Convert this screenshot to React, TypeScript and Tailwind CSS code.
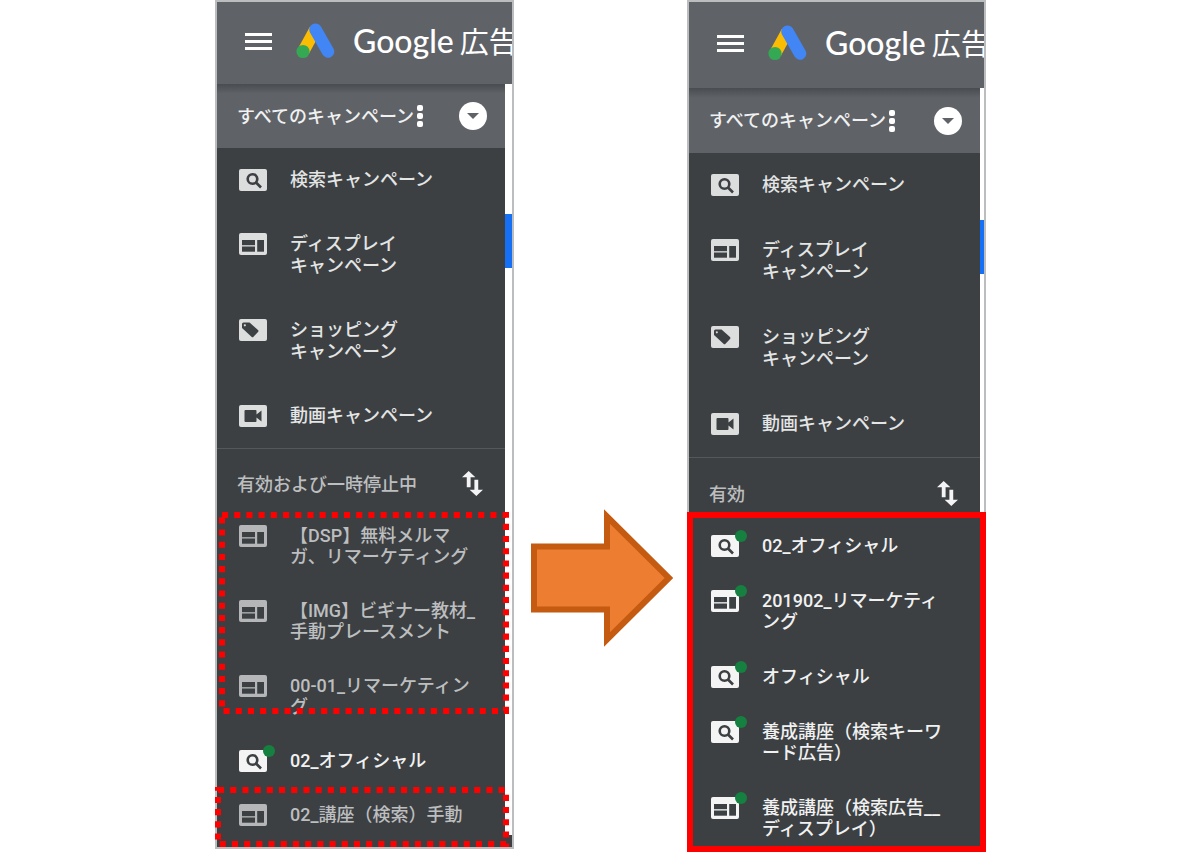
import React from "react";

type IconName = "search" | "display" | "tag" | "video";
type Tone = "menu" | "muted" | "active";

interface Item {
  icon: IconName;
  lines: string[];
  tone: Tone;
}

const CAMPAIGN_TYPES: Item[] = [
  { icon: "search", lines: ["検索キャンペーン"], tone: "menu" },
  { icon: "display", lines: ["ディスプレイ", "キャンペーン"], tone: "menu" },
  { icon: "tag", lines: ["ショッピング", "キャンペーン"], tone: "menu" },
  { icon: "video", lines: ["動画キャンペーン"], tone: "menu" },
];

const ALL_CAMPAIGNS: Item[] = [
  { icon: "display", lines: ["【DSP】無料メルマ", "ガ、リマーケティング"], tone: "muted" },
  { icon: "display", lines: ["【IMG】ビギナー教材_", "手動プレースメント"], tone: "muted" },
  { icon: "display", lines: ["00-01_リマーケティン", "グ"], tone: "muted" },
  { icon: "search", lines: ["02_オフィシャル"], tone: "active" },
  { icon: "display", lines: ["02_講座（検索）手動"], tone: "muted" },
];

const ENABLED_CAMPAIGNS: Item[] = [
  { icon: "search", lines: ["02_オフィシャル"], tone: "active" },
  { icon: "display", lines: ["201902_リマーケティ", "ング"], tone: "active" },
  { icon: "search", lines: ["オフィシャル"], tone: "active" },
  { icon: "search", lines: ["養成講座（検索キーワ", "ード広告）"], tone: "active" },
  { icon: "display", lines: ["養成講座（検索広告__", "ディスプレイ）"], tone: "active" },
];

const ICON_TONE: Record<Tone, string> = {
  menu: "text-[#dcdddd]",
  muted: "text-[#b4b6b7]",
  active: "text-[#f4f4f4]",
};

const TEXT_TONE: Record<Tone, string> = {
  menu: "text-[#e4e5e5]",
  muted: "text-[#bcbebf]",
  active: "text-[#f1f1f1]",
};

function ItemIcon({ name, tone }: { name: IconName; tone: Tone }) {
  return (
    <span className={`relative block h-[21px] shrink-0 ${ICON_TONE[tone]}`}>
      <svg width="28" height="22" viewBox="0 0 28 22" aria-hidden="true">
        <rect width="28" height="22" rx="2" fill="currentColor" />
        {name === "search" && (
          <g fill="none" stroke="#3c4043" strokeWidth="2.6">
            <circle cx="13.5" cy="10" r="4.8" />
            <path d="M17 13.500l5 5" />
          </g>
        )}
        {name === "display" && (
          <g fill="#3c4043">
            <rect x="3" y="7" width="13" height="5.2" />
            <rect x="3" y="13.5" width="13" height="5.2" />
            <rect x="18.2" y="7" width="6.800" height="11.700" />
          </g>
        )}
        {name === "tag" && (
          <path
            fill="#3c4043"
            fillRule="evenodd"
            d="M3 5Q3 3.500 4.500 3.500H10.500L19 11Q20 12 19 13L14.500 17.700Q13.500 18.700 12.500 17.700L3 9ZM5.800 5.300a1 1 0 1 0 .1 0Z"
          />
        )}
        {name === "video" && (
          <path
            fill="#3c4043"
            d="M6.500 5H16.500Q17.500 5 17.500 6V9.500L22.500 5.500V16.500L17.500 12.500V16Q17.500 17 16.500 17H6.500Q5.500 17 5.500 16V6Q5.500 5 6.500 5Z"
          />
        )}
      </svg>
      {tone === "active" && (
        <span className="absolute -top-[5px] -right-2 size-3 rounded-full bg-[#15803f]" />
      )}
    </span>
  );
}

function ItemLink({ item, leading }: { item: Item; leading: string }) {
  return (
    <a href="#" className={`flex items-start gap-[23px] ${leading}`}>
      <ItemIcon name={item.icon} tone={item.tone} />
      <span className={`whitespace-nowrap ${TEXT_TONE[item.tone]}`}>
        {item.lines.map((line) => (
          <span key={line} className="block">
            {line}
          </span>
        ))}
      </span>
    </a>
  );
}

function AdsLogo() {
  return (
    <svg width="40" height="36" viewBox="0 0 40 36" aria-hidden="true">
      <path d="M19 7L7.500 28" stroke="#fbbc04" strokeWidth="12" strokeLinecap="butt" />
      <path d="M19.500 6.700L32 28.500" stroke="#4285f4" strokeWidth="12.500" strokeLinecap="round" />
      <circle cx="7" cy="28.500" r="6.600" fill="#34a853" />
    </svg>
  );
}

interface PanelProps {
  items: Item[];
  filter: string;
  headerClass: string;
  scopeClass: string;
  sideClass: string;
  rowClass: string;
  filterClass: string;
  listClass: string;
  thumbClass: string;
  footer?: boolean;
  children: React.ReactNode;
}

function Panel(p: PanelProps) {
  return (
    <section className="relative w-[299px] shrink-0 border-2 border-[#bcbdbe] bg-white">
      <header className={`relative flex items-center overflow-hidden bg-[#5f6368] pb-1 pl-7 ${p.headerClass}`}>
        <button type="button" aria-label="メニュー" className="flex w-[27px] shrink-0 flex-col gap-1">
          <span className="h-[3px] bg-white" />
          <span className="h-[3px] bg-white" />
          <span className="h-[3px] bg-white" />
        </button>
        <span className="ml-6 shrink-0">
          <AdsLogo />
        </span>
        <h1 className="ml-[17px] flex shrink-0 items-baseline gap-1.5 pt-[2px] whitespace-nowrap text-white">
          <span className="font-[Lato,sans-serif] text-[32px] leading-10 font-medium">Google</span>
          <span className="text-[29px] leading-10 font-normal">広告</span>
        </h1>
      </header>
      <div className="flex">
        <nav className={`shrink-0 bg-[#3c4043] ${p.sideClass}`}>
          <div
            className={`flex items-center bg-[#5f6368] bg-linear-to-b from-[#494c50] to-[#5f6368] to-15% pr-[18px] pl-5 ${p.scopeClass}`}
          >
            <span className="whitespace-nowrap text-[#f1f1f1]">すべてのキャンペーン</span>
            <button type="button" aria-label="その他" className="ml-[3px] flex flex-col gap-[2px]">
              <span className="size-[6px] rounded-[2px] bg-white" />
              <span className="size-[6px] rounded-[2px] bg-white" />
              <span className="size-[6px] rounded-[2px] bg-white" />
            </button>
            <button
              type="button"
              aria-label="開く"
              className="ml-auto flex size-7 items-center justify-center rounded-full bg-white"
            >
              <svg width="12" height="6" viewBox="0 0 12 6" aria-hidden="true">
                <path d="M0 0H12L6 6Z" fill="#5f6368" />
              </svg>
            </button>
          </div>
          <ul className="border-b border-[#54585b]">
            {CAMPAIGN_TYPES.map((item) => (
              <li key={item.lines[0]} className={`pl-[22px] ${p.rowClass}`}>
                <ItemLink item={item} leading="leading-[22px]" />
              </li>
            ))}
          </ul>
          <div className={`flex items-center justify-between pr-[22px] pl-5 ${p.filterClass}`}>
            <h2 className="text-[#bcbebf]">{p.filter}</h2>
            <button type="button" aria-label="並べ替え" className="pb-[2px]">
              <svg width="21" height="25" viewBox="0 0 22 26" aria-hidden="true">
                <g fill="#f4f4f4">
                  <path d="M7 0L14 6.500H9V17H5V6.500H0Z" />
                  <path d="M15 26L8 19.500H13V9H17V19.500H22Z" />
                </g>
              </svg>
            </button>
          </div>
          <ul className={`flex flex-col pl-[22px] ${p.listClass}`}>
            {p.items.map((item) => (
              <li key={item.lines[0]}>
                <ItemLink item={item} leading="leading-[21px]" />
              </li>
            ))}
          </ul>
        </nav>
        <div className="flex grow flex-col justify-between">
          <div className={`h-[54px] bg-[#1570f5] ${p.thumbClass}`} />
          {p.footer && <div className="h-3 bg-[#3c4043]" />}
        </div>
      </div>
      {p.children}
    </section>
  );
}

export default function App() {
  return (
    <main className="flex min-h-screen items-start justify-center bg-white pl-px font-['Roboto','Noto_Sans_CJK_JP',sans-serif] text-[18px] font-medium">
      <Panel
        items={ALL_CAMPAIGNS}
        filter="有効および一時停止中"
        headerClass="h-[82px]"
        scopeClass="h-16"
        sideClass="w-[288px]"
        rowClass="py-[21px]"
        filterClass="h-[70px]"
        listClass="gap-[33px] pt-[6px] pb-[22px]"
        thumbClass="mt-[130px]"
        footer
      >
        <svg
          className="pointer-events-none absolute -top-[2px] -left-[2px]"
          width="298"
          height="850"
          viewBox="0 0 298 850"
          fill="none"
          stroke="#fe0000"
          strokeWidth="6"
          strokeDasharray="6.1 6.1"
          aria-hidden="true"
        >
          <rect x="7" y="515" width="284" height="196" />
          <rect x="3" y="790" width="288" height="54" />
        </svg>
      </Panel>
      <div className="flex w-[173px] shrink-0 justify-center pt-[508px]">
        <svg width="144" height="140" viewBox="0 0 144 140" aria-hidden="true">
          <path
            d="M5 38.500H78V8.500L140 70L78 131.500V101.500H5Z"
            fill="#ed7d31"
            stroke="#c55a11"
            strokeWidth="6"
          />
        </svg>
      </div>
      <Panel
        items={ENABLED_CAMPAIGNS}
        filter="有効"
        headerClass="h-[86px]"
        scopeClass="h-[65px]"
        sideClass="w-[291px]"
        rowClass="pt-[21px] pb-[22px]"
        filterClass="h-[72px]"
        listClass="gap-[34px] pt-[5px] pb-[11px]"
        thumbClass="mt-[132px]"
      >
        <div className="pointer-events-none absolute -inset-x-[2px] top-[510px] -bottom-[2px] border-[6px] border-[#fe0000]" />
      </Panel>
    </main>
  );
}
